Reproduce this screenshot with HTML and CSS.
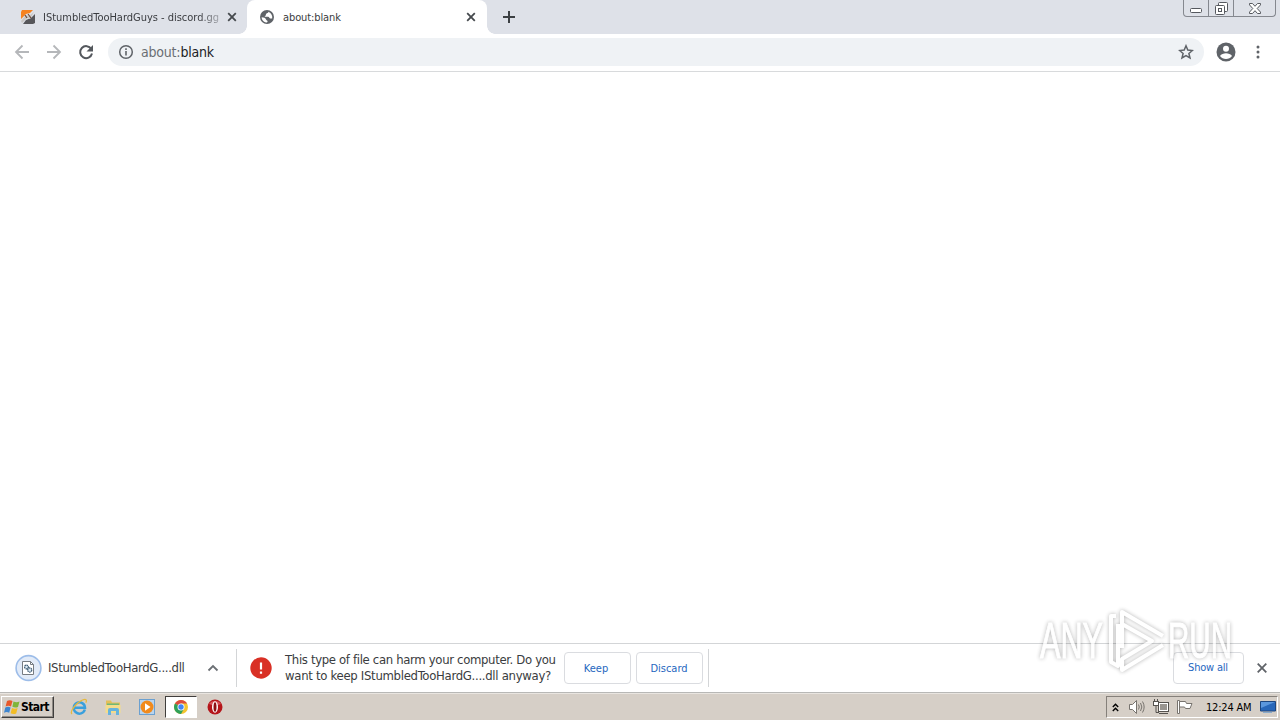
FILE: index.html
```html
<!DOCTYPE html>
<html lang="en">
<head>
    <meta charset="UTF-8">
    <title>about:blank</title>
    <link rel="stylesheet" href="styles.css">
</head>
<body>
    <div class="tabstrip">
        <div class="tab tab-inactive">
            <svg class="favicon" width="16" height="16" viewBox="0 0 16 16">
                <path d="M2 1h11l-3 3-4 1-5 5V3z" fill="#f58220"/>
                <path d="M15 5v9l-2 1H3l3-4 5-2z" fill="#56565a"/>
                <path d="M1 12l5-6 3 1 5-4-4 7-3-1-5 5z" fill="#c9c6c4"/>
                <path d="M5 6l2 3M8 5l3 4" stroke="#6d4c3a" stroke-width="1.200"/>
            </svg>
            <span class="tab-title faded">IStumbledTooHardGuys - discord.gg</span>
            <svg class="tab-close" width="10" height="10" viewBox="0 0 10 10"><path d="M1.2 1.2l7.6 7.6M8.8 1.2L1.2 8.8" stroke="#45494d" stroke-width="1.8"/></svg>
        </div>
        <div class="tab tab-active">
            <svg class="favicon" width="16" height="16" viewBox="0 0 16 16">
                <circle cx="8" cy="8" r="7" fill="#5f6368"/>
                <path d="M9.500 2.700C9.300 4.300 7.500 4 7 5c-.3.900.3 1.300-.7 1.700-.6.300-.8 1 .2 1.100h2.600c1.200.1 1 1.500 2 1.700l2.100.1c.5-2.700-.8-5.700-3.700-6.900z" fill="#fff"/>
                <path d="M2.600 8.300c0 2.500 1.700 4.600 4.300 5.100 1 .1 1.700-.3 1.700-1.200 0-1-1.300-.8-1.600-1.800-.3-1.500-2.200-2-4.400-2.100z" fill="#fff"/>
            </svg>
            <span class="tab-title">about:blank</span>
            <svg class="tab-close" width="10" height="10" viewBox="0 0 10 10"><path d="M1.2 1.2l7.6 7.6M8.8 1.2L1.2 8.8" stroke="#45494d" stroke-width="1.8"/></svg>
        </div>
        <svg class="new-tab" width="12" height="12" viewBox="0 0 12 12"><path d="M6 0v12M0 6h12" stroke="#3c4043" stroke-width="2"/></svg>
        <div class="window-buttons">
            <span class="win-btn win-min"><svg width="12" height="5" viewBox="0 0 12 5"><rect x=".5" y=".5" width="11" height="4" rx="1" fill="#fff" stroke="#55585e"/></svg></span>
            <span class="win-btn win-max"><svg width="13" height="13" viewBox="0 0 13 13" fill="#fff" stroke="#55585e"><rect x="3.500" y=".5" width="9" height="9" rx="1"/><rect x=".5" y="3.500" width="9" height="9" rx="1"/><rect x="3.500" y="6.500" width="3" height="3"/></svg></span>
            <span class="win-btn win-close"><svg width="12" height="11" viewBox="0 0 12 11"><path d="M.5.5h3L6 3.300 8.500.5h3v1.400L8.200 5.500l3.300 3.600v1.400h-3L6 7.700l-2.500 2.800h-3V9.100l3.300-3.600L.5 1.900z" fill="#fff" stroke="#55585e"/></svg></span>
        </div>
    </div>

    <div class="toolbar">
        <svg class="nav-icon" width="16" height="16" viewBox="0 0 16 16" fill="none" stroke="#b5b7ba" stroke-width="1.800"><path d="M15 8H2.500M8.500 1.500L2 8l6.500 6.500"/></svg>
        <svg class="nav-icon" width="16" height="16" viewBox="0 0 16 16" fill="none" stroke="#b5b7ba" stroke-width="1.800"><path d="M1 8h12.500M7.500 1.500L14 8l-6.500 6.500"/></svg>
        <svg class="nav-icon" width="16" height="16" viewBox="0 0 16 16"><path d="M13.300 5A6 6 0 1 0 14 9.500" fill="none" stroke="#54585d" stroke-width="2"/><path d="M15 1v6.500H8.500z" fill="#54585d"/></svg>
        <div class="omnibox">
            <svg width="16" height="16" viewBox="0 0 16 16"><circle cx="8" cy="8" r="6.300" fill="none" stroke="#5f6368" stroke-width="1.500"/><path d="M8 7v4.500M8 4.300V6" stroke="#5f6368" stroke-width="1.600"/></svg>
            <span class="url"><span class="scheme">about:</span>blank</span>
            <svg class="star" width="16" height="16" viewBox="0 0 16 16"><path d="M8 1.800l1.800 4.300 4.600.4-3.500 3 1.100 4.500L8 11.600 4 14l1.100-4.500-3.500-3 4.600-.4z" fill="none" stroke="#5f6368" stroke-width="1.500"/></svg>
        </div>
        <svg class="avatar" width="20" height="20" viewBox="0 0 20 20"><circle cx="10" cy="10" r="9.500" fill="#5f6368"/><circle cx="10" cy="6.700" r="3" fill="#fff"/><path d="M4 14c1-2 3.800-2.800 6-2.800s5 .8 6 2.800c-1.300 1.900-3.600 3-6 3s-4.700-1.100-6-3z" fill="#fff"/></svg>
        <svg class="menu" width="4" height="14" viewBox="0 0 4 14" fill="#5f6368"><circle cx="2" cy="2" r="1.500"/><circle cx="2" cy="7" r="1.500"/><circle cx="2" cy="12" r="1.500"/></svg>
    </div>

    <div class="page"></div>

    <div class="shelf">
        <div class="download">
            <svg width="28" height="28" viewBox="0 0 28 28">
                <circle cx="14.500" cy="14" r="12.400" fill="#e2ebf8" stroke="#9dbde9" stroke-width="1.600"/>
                <path d="M8.500 7.500h8l3 3v10h-11z" fill="#fff" stroke="#777c82"/>
                <path d="M16.500 7.500v3h3" fill="none" stroke="#777c82"/>
                <circle cx="12.500" cy="13" r="1.900" fill="#dce8f2" stroke="#3c5a72" stroke-width="1.200" stroke-dasharray="1.500 .5"/>
                <circle cx="15.700" cy="16" r="2.100" fill="#dce8f2" stroke="#3c5a72" stroke-width="1.200" stroke-dasharray="1.500 .5"/>
            </svg>
            <span class="file-name">IStumbledTooHardG....dll</span>
            <svg class="chevron" width="12" height="8" viewBox="0 0 12 8"><path d="M1.500 6.500L6 2l4.500 4.500" fill="none" stroke="#6b6f74" stroke-width="1.800"/></svg>
        </div>
        <div class="warning">
            <svg class="alert" width="22" height="22" viewBox="0 0 22 22"><circle cx="11" cy="11" r="10.700" fill="#d93025"/><path d="M11 5.500v7M11 14.500v2.200" stroke="#fff" stroke-width="2.200"/></svg>
            <p class="warning-text"><span class="line-one">This type of file can harm your computer. Do you</span><br><span class="line-two">want to keep IStumbledTooHardG....dll anyway?</span></p>
            <button class="btn keep">Keep</button>
            <button class="btn">Discard</button>
        </div>
        <button class="btn show-all">Show all</button>
        <svg class="shelf-close" width="10" height="10" viewBox="0 0 10 10"><path d="M.7.7l8.600 8.600M9.300.7L.7 9.300" stroke="#5f6368" stroke-width="1.800"/></svg>
    </div>

    <div class="taskbar">
        <div class="start">
            <svg width="17" height="16" viewBox="0 0 17 16">
                <path d="M3 2c2-1.300 3.800-1 5.500 0L7 7.400C5.300 6.500 3.600 6.400 1.600 7.400z" fill="#e8582a"/>
                <path d="M9.500 2.500c2 1 3.900 1 6 .1L14 8c-2 .9-3.800.7-5.600-.2z" fill="#7fb539"/>
                <path d="M1.300 8.500c2-1 3.600-.9 5.300 0l-1.400 5.300c-1.700-.9-3.300-1-5.200 0z" fill="#3f86cf"/>
                <path d="M8 9c1.800.9 3.600 1 5.600.1L12.200 14.400c-2 .9-3.800.8-5.600-.1z" fill="#f3bd25"/>
            </svg>
            <span>Start</span>
        </div>
        <div class="task">
            <svg width="18" height="18" viewBox="0 0 18 18"><path d="M14.800 11.500A5.600 5.600 0 1 1 15 9.800H5" fill="none" stroke="#3aa0dd" stroke-width="2.500"/><path d="M2 16C-.5 14 5.500 5 12.500 2c4-1.500 4.500.2 3.300 2.600" fill="none" stroke="#e6b93e" stroke-width="1.300"/></svg>
        </div>
        <div class="task">
            <svg width="18" height="18" viewBox="0 0 18 18"><path d="M2 2.500h5l1 2h8v10H2z" fill="#e3bf58"/><path d="M3 5.500h12v3H3z" fill="#6fb878"/><path d="M1.500 7h15v8h-15z" fill="#f4dc8b"/><path d="M4 17v-5q0-2 2-2h7q2 0 2 2v5h-3v-4H7v4z" fill="#66b3dd"/></svg>
        </div>
        <div class="task">
            <svg width="18" height="18" viewBox="0 0 18 18"><rect x="1.500" y="1.500" width="15" height="15" fill="#b9d4ee" stroke="#6ba0d0"/><circle cx="9" cy="9" r="6.500" fill="#f18a1c"/><path d="M7 5.300v7.400L12.500 9z" fill="#fff"/></svg>
        </div>
        <div class="task task-active">
            <svg width="16" height="16" viewBox="0 0 16 16"><circle cx="8" cy="8" r="7" fill="#f4c430"/><path d="M8 8L1.940 4.500A7 7 0 0 1 14.060 4.500H8z" fill="#dd4b3e"/><path d="M8 8L1.940 4.500A7 7 0 0 0 8 15l3-5.300z" fill="#2fa15a"/><circle cx="8" cy="8" r="3.500" fill="#fff"/><circle cx="8" cy="8" r="2.700" fill="#4285f4"/></svg>
        </div>
        <div class="task">
            <svg width="16" height="16" viewBox="0 0 16 16"><circle cx="8" cy="8" r="7.500" fill="#b5151a"/><path d="M2 5a7 6 0 0 1 12 0 9 5 0 0 1-12 0z" fill="#d8545a"/><ellipse cx="8" cy="8" rx="3" ry="5.800" fill="#fff"/><ellipse cx="8" cy="8" rx="1.500" ry="4.800" fill="#8e1014"/></svg>
        </div>
        <div class="tray">
            <svg class="tray-more" width="7" height="9" viewBox="0 0 7 9" fill="none" stroke="#000" stroke-width="1.400"><path d="M.8 4l2.700-2.700L6.200 4M.8 8l2.700-2.700L6.200 8"/></svg>
            <svg class="tray-sound" width="16" height="16" viewBox="0 0 16 16"><path d="M.5 5.500h3l4-4v13l-4-4h-3z" fill="#fff" stroke="#77736e"/><path d="M9.500 5.500q1.500 2.500 0 5M11.500 4q2.700 4 0 8M13.500 2.500q3.300 5.500 0 11" fill="none" stroke="#77736e"/></svg>
            <svg class="tray-net" width="16" height="16" viewBox="0 0 16 16"><rect x="5.500" y="3.500" width="10" height="9" fill="#999590" stroke="#55524e"/><rect x="6.500" y="4.500" width="8" height="7" fill="none" stroke="#fff"/><path d="M1.500 0v3M4.500 0v3M3 5.500v8h3M6 14.500h9" fill="none" stroke="#55524e"/><rect x=".5" y="2.500" width="5" height="4" fill="#fff" stroke="#55524e"/></svg>
            <svg class="tray-flag" width="16" height="16" viewBox="0 0 16 16"><path d="M.5 1.500h2v13h-2z" fill="#fff" stroke="#77736e"/><path d="M2.500 2.500h6l1 2h5.500l-2 5H8.500l-1-1.500h-5z" fill="#fff" stroke="#77736e"/></svg>
            <span class="clock">12:24 AM</span>
            <svg width="16" height="14" viewBox="0 0 16 14"><path d="M.5 1.500h15v9.500H.5z" fill="#2867b9" stroke="#1d467f"/><path d="M1 2h14L1 8z" fill="#5b97dd"/><path d="M3 12.500h9" stroke="#8aabcc"/></svg>
        </div>
    </div>

    <svg class="watermark" width="220" height="80" viewBox="0 0 220 80">
        <g class="mark-text">
            <text x="10" y="56" textLength="63" lengthAdjust="spacingAndGlyphs">ANY</text>
            <text x="138" y="56" textLength="64" lengthAdjust="spacingAndGlyphs">RUN</text>
        </g>
        <path class="mark-play" d="M86 14h-5v46l7 4V22M92 46V10l41 24M92 22l30 17-30 18v11l41-25"/>
    </svg>
</body>
</html>
```
FILE: styles.css
```css
* {
    box-sizing: border-box;
}
body {
    margin: 0;
    width: 1280px;
    height: 720px;
    overflow: hidden;
    display: flex;
    flex-direction: column;
    position: relative;
    background-color: #fff;
    color: #3a3c40;
    font-family: "DejaVu Sans Condensed", "DejaVu Sans", sans-serif;
    font-stretch: condensed;
    font-size: 11px;
    white-space: nowrap;
}
svg {
    display: block;
    flex: none;
}

/* tabs */
.tabstrip {
    height: 34px;
    flex: none;
    display: flex;
    background-color: #dee1e8;
}
.tab {
    display: flex;
    align-items: center;
    height: 34px;
}
.tab-inactive {
    width: 247px;
    padding-left: 20px;
    background-color: #dee1e8;
}
.tab-active {
    width: 240px;
    padding-left: 12px;
    background-color: #fff;
    border-radius: 8px 8px 0 0;
    position: relative;
}
.tab-active::before,
.tab-active::after {
    content: "";
    position: absolute;
    bottom: 0;
    width: 8px;
    height: 8px;
}
.tab-active::before {
    left: -8px;
    background: radial-gradient(circle at 0 0, transparent 7.5px, #fff 8px);
}
.tab-active::after {
    right: -8px;
    background: radial-gradient(circle at 100% 0, transparent 7.5px, #fff 8px);
}
.tab-title {
    width: 177px;
    margin-left: 7px;
    overflow: hidden;
    letter-spacing: -0.02px;
}
.tab-active .tab-title {
    padding-left: 1px;
    letter-spacing: -0.1px;
}
.faded {
    -webkit-mask-image: linear-gradient(to right, #000 88%, rgba(0, 0, 0, 0.3));
    mask-image: linear-gradient(to right, #000 88%, rgba(0, 0, 0, 0.3));
}
.tab-close {
    margin-left: 7px;
}
.new-tab {
    margin: 11px 0 0 16px;
}
.window-buttons {
    display: flex;
    width: 93px;
    height: 17px;
    margin-left: auto;
    margin-right: 4px;
    border: 1px solid #85888f;
    border-top: none;
    border-radius: 0 0 4px 4px;
}
.win-btn {
    display: flex;
    justify-content: center;
    align-items: center;
}
.win-min {
    width: 25px;
    padding-top: 5px;
    border-right: 1px solid #85888f;
}
.win-max {
    width: 25px;
    border-right: 1px solid #85888f;
}
.win-close {
    flex: 1;
}

/* toolbar */
.toolbar {
    height: 38px;
    flex: none;
    display: flex;
    align-items: center;
    padding: 0 20px 2px 14px;
    border-bottom: 1px solid #d8dadc;
}
.nav-icon {
    margin-right: 16px;
}
.nav-icon:nth-child(3) {
    margin-right: 14px;
}
.omnibox {
    width: 1096px;
    height: 28px;
    display: flex;
    align-items: center;
    padding: 0 10px;
    border-radius: 14px;
    background-color: #eff2f5;
}
.url {
    margin-left: 7px;
    font-size: 14px;
    letter-spacing: -0.2px;
    color: #202124;
}
.scheme {
    color: #6a6e73;
}
.star {
    margin-left: auto;
}
.avatar {
    margin-left: 12px;
}
.menu {
    margin-left: auto;
}
.page {
    flex: 1;
}

/* downloads */
.shelf {
    height: 50px;
    flex: none;
    display: flex;
    align-items: center;
    padding-right: 13px;
    border-top: 1px solid #d3d5d7;
    border-bottom: 1px solid #b8b8b6;
}
.download {
    width: 237px;
    height: 38px;
    display: flex;
    align-items: center;
    padding-left: 14px;
    border-right: 1px solid #d3d5d7;
}
.file-name {
    width: 140px;
    margin-left: 6px;
    padding-bottom: 2px;
    font-size: 13px;
    letter-spacing: -0.34px;
}
.chevron {
    margin-left: 19px;
}
.warning {
    width: 472px;
    height: 38px;
    display: flex;
    align-items: center;
    padding-left: 13px;
    border-right: 1px solid #d3d5d7;
}
.warning-text {
    width: 279px;
    margin: 0 0 0 13px;
    font-size: 13px;
    line-height: 16px;
}
.line-one {
    letter-spacing: -0.34px;
}
.line-two {
    letter-spacing: -0.3px;
}
.btn {
    width: 67px;
    height: 32px;
    margin: 0 5px 0 0;
    padding: 0 1px 0 0;
    font-family: inherit;
    font-stretch: inherit;
    font-size: 11px;
    color: #2667c0;
    background-color: #fff;
    border: 1px solid #dadce0;
    border-radius: 4px;
}
.keep {
    padding-right: 3px;
}
.show-all {
    width: 71px;
    margin: 0 13px 0 auto;
    padding: 0 1px 2px 0;
    letter-spacing: -0.2px;
}

/* taskbar */
.taskbar {
    height: 27px;
    flex: none;
    display: flex;
    align-items: center;
    padding-right: 2px;
    background-color: #d6cfc7;
    border-top: 1px solid #e9e5e0;
}
.start {
    width: 53px;
    height: 22px;
    margin: 0 8px 0 1px;
    display: flex;
    align-items: center;
    padding-left: 2px;
    font-size: 12px;
    font-weight: bold;
    letter-spacing: -0.6px;
    color: #000;
    border: 1px solid;
    border-color: #fff #403e3c #403e3c #fff;
    box-shadow: inset -1px -1px 0 #8f8a84;
}
.task {
    width: 34px;
    height: 22px;
    display: flex;
    justify-content: center;
    align-items: center;
}
.task-active {
    width: 32px;
    margin: 0 1px;
    background-color: #fff;
    border: 1px solid;
    border-color: #403e3c #fff #fff #403e3c;
}
.tray {
    width: 172px;
    height: 22px;
    margin-left: auto;
    display: flex;
    align-items: center;
    padding-left: 5px;
    color: #000;
    border: 1px solid;
    border-color: #85807a #fff #fff #85807a;
}
.tray-sound {
    margin-left: 10px;
}
.tray-net {
    margin-left: 8px;
}
.tray-flag {
    margin-left: 8px;
}
.clock {
    width: 49px;
    margin: 0 5px 0 13px;
    letter-spacing: -0.2px;
}

/* logo drawn over the page corner */
.watermark {
    position: absolute;
    left: 1030px;
    top: 602px;
    filter: drop-shadow(0 0 2px rgba(0, 0, 0, 0.4));
    opacity: 0.75;
}
.mark-text {
    font-family: "Liberation Sans", Arial, sans-serif;
    font-size: 50px;
    fill: #fff;
    stroke: #fff;
    stroke-width: 1px;
}
.mark-play {
    fill: none;
    stroke: #fff;
    stroke-width: 4px;
    stroke-linejoin: round;
}
```
